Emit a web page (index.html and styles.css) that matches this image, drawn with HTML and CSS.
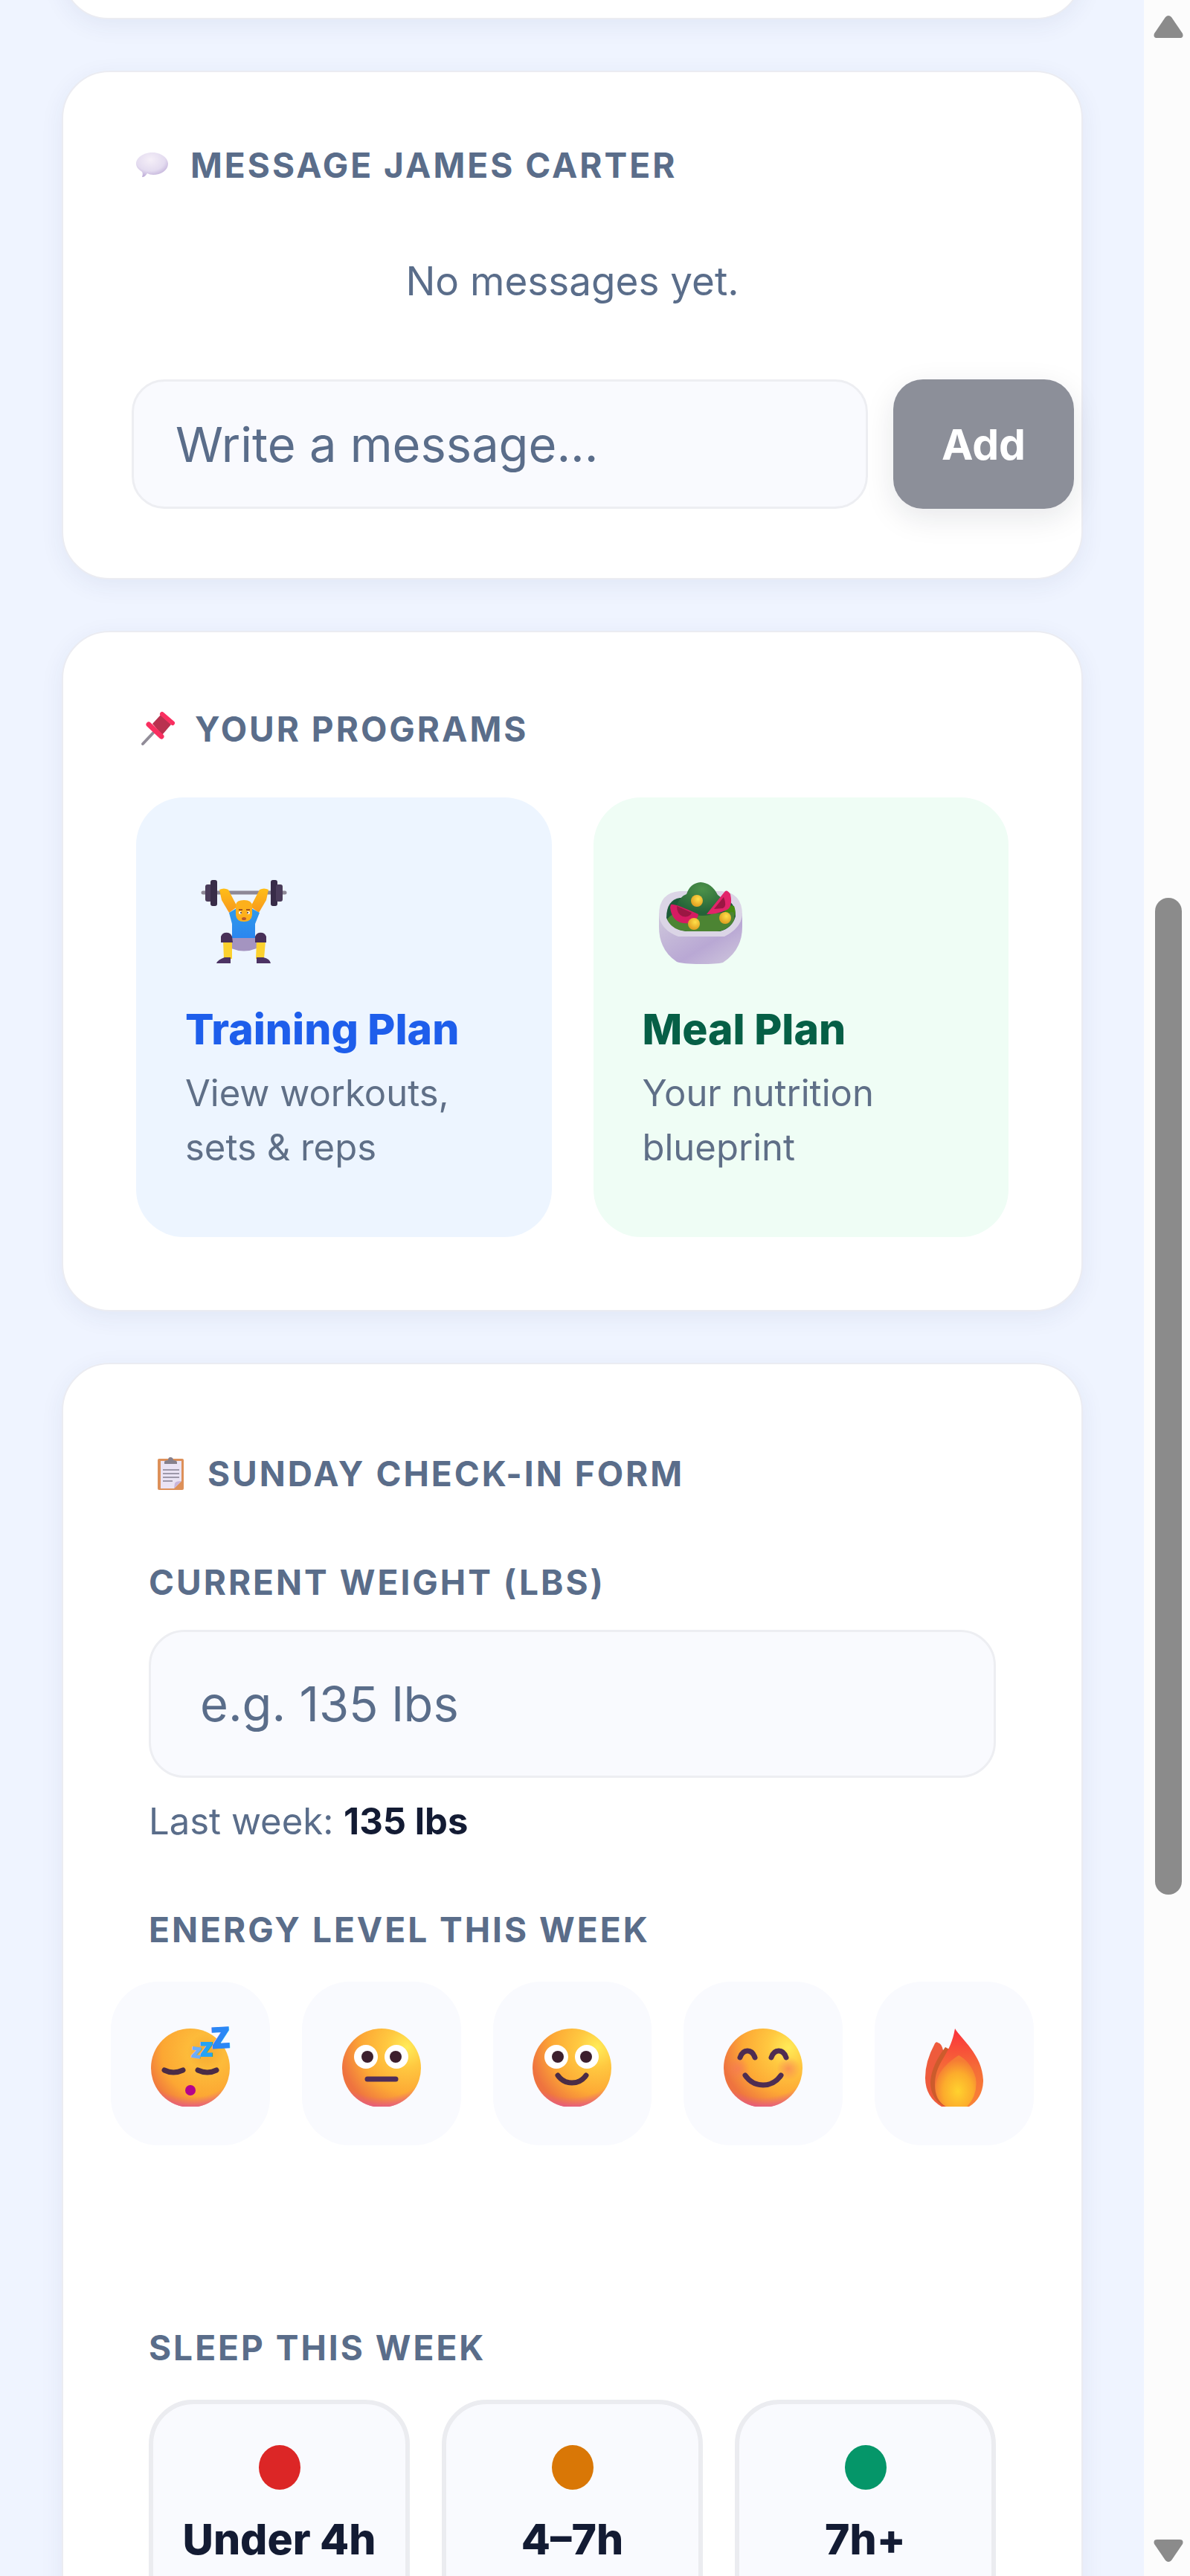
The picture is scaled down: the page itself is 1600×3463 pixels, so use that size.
FILE: index.html
```html
<!DOCTYPE html>
<html lang="en">
<head>
  <meta charset="UTF-8" />
  <meta name="viewport" content="width=device-width, initial-scale=1.0" />
  <title>Client Check-In</title>
  <link rel="stylesheet" href="styles.css">
</head>
<body>
  <!-- shared gradients for the emoji -->
  <svg class="defs" aria-hidden="true">
    <defs>
      <radialGradient id="face" cx="0.82" cy="0.24" r="0.85">
        <stop offset="0" stop-color="#ffec58" />
        <stop offset="0.3" stop-color="#ffc840" />
        <stop offset="0.68" stop-color="#fda935" />
        <stop offset="1" stop-color="#ee733f" />
      </radialGradient>
      <radialGradient id="sleepface" cx="0.7" cy="0.3" r="0.8">
        <stop offset="0" stop-color="#f3a932" />
        <stop offset="0.3" stop-color="#fdbb3a" />
        <stop offset="0.7" stop-color="#fca733" />
        <stop offset="1" stop-color="#ee733f" />
      </radialGradient>
      <radialGradient id="chin" cx="0.5" cy="0.1" r="0.94">
        <stop offset="0.82" stop-color="#e85b8a" stop-opacity="0" />
        <stop offset="1" stop-color="#e0529a" />
      </radialGradient>
      <radialGradient id="cheek">
        <stop offset="0" stop-color="#f7745c" stop-opacity="0.6" />
        <stop offset="1" stop-color="#f7745c" stop-opacity="0" />
      </radialGradient>
      <clipPath id="faceclip"><rect width="120" height="111" /></clipPath>
    </defs>
  </svg>

  <div class="app">
    <main class="page">
      <section class="card card-prev"></section>

      <section class="card card-message">
        <h2 class="card-title">
          <svg class="title-icon" viewBox="0 0 56 56" aria-hidden="true">
            <defs>
              <radialGradient id="bubble" cx="0.45" cy="0.3" r="0.75">
                <stop offset="0" stop-color="#f5eff8" />
                <stop offset="0.6" stop-color="#e4dcf0" />
                <stop offset="1" stop-color="#b8a5d3" />
              </radialGradient>
            </defs>
            <path d="M28 11C39 11 49 18 49 26C49 35 39 41 29 41C26 41 23 40 21 39C19 42 17 44 14 44C15 41 15 39 14 37C9 34 6 30 6 26C6 18 16 11 28 11Z" fill="url(#bubble)" />
          </svg>
          Message James Carter
        </h2>
        <p class="empty">No messages yet.</p>
        <form class="message-form">
          <input class="field message-input" type="text" placeholder="Write a message..." aria-label="Message" />
          <button class="add-btn" type="button">Add</button>
        </form>
      </section>

      <section class="card card-programs">
        <h2 class="card-title">
          <svg class="title-icon" viewBox="0 0 56 56" aria-hidden="true">
            <path d="M9 48L26 30" stroke="#918c98" stroke-width="4" stroke-linecap="round" />
            <path d="M22 21L33 9L47 22L35 36Z" fill="#b9314f" />
            <path d="M35 8L49 20" stroke="#f92f60" stroke-width="6" stroke-linecap="round" />
            <path d="M17 22L34 38" stroke="#f92f60" stroke-width="7" stroke-linecap="round" />
          </svg>
          Your Programs
        </h2>
        <div class="programs">
          <a class="program program-training" href="#training">
            <svg class="program-icon" viewBox="-2 0 144 144" aria-hidden="true">
              <defs>
                <linearGradient id="shirt" x1="0" y1="0" x2="0" y2="1">
                  <stop offset="0" stop-color="#2f9bea" />
                  <stop offset="1" stop-color="#2b85f0" />
                </linearGradient>
                <linearGradient id="arm" x1="0" y1="0" x2="0" y2="1">
                  <stop offset="0" stop-color="#ffbe17" />
                  <stop offset="1" stop-color="#f7981e" />
                </linearGradient>
              </defs>
              <path d="M22 44H132" stroke="#8d8896" stroke-width="5" stroke-linecap="round" />
              <path d="M44 40Q50 37 56 40L68 63L57 71L47 54Z" fill="url(#arm)" />
              <path d="M110 40Q104 37 98 40L86 63L97 71L107 54Z" fill="url(#arm)" />
              <path d="M57 71L67 65H87L98 71L92 86V107H61V86Z" fill="url(#shirt)" />
              <path d="M60 105H94V119Q77 126 60 119Z" fill="#a494c0" />
              <path d="M49 109H61V133H50Z" fill="#fcd12e" />
              <path d="M94 109H106L104 133H93Z" fill="#fcd12e" />
              <path d="M46 111V103A8 8 0 0 1 61 103L62 111Z" fill="#483058" />
              <path d="M92 111V103A8 8 0 0 1 107 103V111Z" fill="#483058" />
              <path d="M51 131H59V139H40Q42 134 51 131Z" fill="#4c3364" />
              <path d="M94 131H103Q112 133 113 139H94Z" fill="#4c3364" />
              <path d="M66 66V60Q67 54 77 54Q88 54 88 62V74Q87 83 77 83Q67 83 66 74Z" fill="#fdb01c" />
              <path d="M70 67H75M80 67H85" stroke="#a7571b" stroke-width="2" />
              <circle cx="72" cy="71" r="2" fill="#fff" /><circle cx="83" cy="71" r="2" fill="#fff" />
              <circle cx="73" cy="71" r="1" fill="#402a32" /><circle cx="82" cy="71" r="1" fill="#402a32" />
              <ellipse cx="77" cy="79" rx="3" ry="2" fill="#b8582c" />
              <rect x="25" y="33" width="9" height="23" rx="3" fill="#4a3c5a" />
              <rect x="32" y="27" width="9" height="35" rx="3" fill="#382c48" />
              <rect x="113" y="27" width="9" height="35" rx="3" fill="#382c48" />
              <rect x="120" y="33" width="9" height="23" rx="3" fill="#4a3c5a" />
            </svg>
            <span class="program-name">Training Plan</span>
            <span class="program-text">View workouts, sets &amp; reps</span>
          </a>
          <a class="program program-meal" href="#meal">
            <svg class="program-icon" viewBox="-2 0 144 144" aria-hidden="true">
              <defs>
                <linearGradient id="bowl" x1="0" y1="0" x2="1" y2="1">
                  <stop offset="0" stop-color="#cfc8dc" />
                  <stop offset="0.6" stop-color="#b9a8d4" />
                  <stop offset="1" stop-color="#d0c8dd" />
                </linearGradient>
                <radialGradient id="leaf" cx="0.55" cy="0.2" r="0.7">
                  <stop offset="0" stop-color="#4c9249" />
                  <stop offset="1" stop-color="#256338" />
                </radialGradient>
                <radialGradient id="corn" cx="0.6" cy="0.35" r="0.6">
                  <stop offset="0" stop-color="#ffe04a" />
                  <stop offset="1" stop-color="#e3a323" />
                </radialGradient>
              </defs>
              <path d="M20 72H132V90Q132 121 106 138Q98 140 76 140Q52 140 44 137Q20 121 20 90Z" fill="url(#bowl)" />
              <path d="M48 42H104Q132 44 132 74Q130 92 108 103H46Q22 94 20 74Q20 44 48 42Z" fill="#dbd5e6" />
              <path d="M48 51H106Q123 56 123 76Q118 92 102 96H56Q36 92 30 78Q30 54 48 51Z" fill="#1c5a38" />
              <path d="M100 58L121 62Q126 76 116 80Z" fill="#438a13" />
              <path d="M31 80Q38 69 56 72L82 73L120 70Q124 79 118 86Q108 96 98 96H58Q38 95 31 80Z" fill="#4c8433" />
              <path d="M44 61Q48 49 57 46Q62 31 76 30Q91 31 99 47Q107 52 106 61Q96 76 76 75Q60 74 44 61Z" fill="url(#leaf)" />
              <path d="M36 60Q40 58 73 73Q72 82 62 85Q38 88 35 64Z" fill="#d51b62" />
              <path d="M44 62L64 71Q61 78 52 76Q44 73 44 62Z" fill="#9b1743" />
              <path d="M109 42Q112 40 116 46Q120 65 109 68Q99 73 84 73Z" fill="#e2246a" />
              <path d="M107 50Q112 62 106 65L94 66Z" fill="#9b1743" />
              <circle cx="71" cy="55" r="8" fill="url(#corn)" />
              <circle cx="67" cy="86" r="8" fill="url(#corn)" />
              <circle cx="109" cy="78" r="8" fill="url(#corn)" />
            </svg>
            <span class="program-name">Meal Plan</span>
            <span class="program-text">Your nutrition blueprint</span>
          </a>
        </div>
      </section>

      <section class="card card-checkin">
        <h2 class="card-title">
          <svg class="title-icon" viewBox="0 0 56 56" aria-hidden="true">
            <rect x="12" y="8" width="35" height="42" rx="2" fill="#dd9059" />
            <path d="M16 11H44V38L34 48H16Z" fill="#eae3f4" />
            <path d="M44 38L34 48L35 41Q36 38 44 38Z" fill="#c9b5dc" />
            <path d="M19 23H41M19 28H41M19 33H41M19 38H32" stroke="#9e98aa" stroke-width="2" />
            <path d="M21 15V12Q22 10 26 10Q26 6 29 6Q33 6 33 10Q38 10 38 13V15Z" fill="#86808c" />
          </svg>
          Sunday Check-In Form
        </h2>
        <form class="checkin-form">
          <label class="label" for="weight">Current Weight (lbs)</label>
          <input class="field weight-input" id="weight" type="text" placeholder="e.g. 135 lbs" />
          <p class="hint">Last week: <strong>135 lbs</strong></p>

          <h3 class="label">Energy Level This Week</h3>
          <div class="energy">
            <button class="energy-btn" type="button" aria-label="Exhausted">
              <svg viewBox="0 0 120 120" aria-hidden="true">
                <g clip-path="url(#faceclip)">
                  <circle cx="60" cy="59" r="53" fill="url(#sleepface)" />
                  <circle cx="60" cy="59" r="53" fill="url(#chin)" />
                </g>
                <path d="M25 62Q37 68 50 62M70 62Q83 68 95 62" fill="none" stroke="#4b2c46" stroke-width="7" stroke-linecap="round" />
                <circle cx="60" cy="89" r="7" fill="#b5028c" />
                <g class="zzz">
                  <text x="62" y="45" font-size="18" fill="#6faef8" stroke="#6faef8" transform="rotate(8 68 38)">Z</text>
                  <text x="73" y="43" font-size="25" fill="#24a3f5" stroke="#24a3f5">Z</text>
                  <text x="88" y="32" font-size="37" fill="#2b87f5" stroke="#2b87f5" transform="rotate(-3 99 18)">Z</text>
                </g>
              </svg>
            </button>
            <button class="energy-btn" type="button" aria-label="Low">
              <svg viewBox="0 0 120 120" aria-hidden="true">
                <g clip-path="url(#faceclip)">
                  <circle cx="60" cy="59" r="53" fill="url(#face)" />
                  <circle cx="60" cy="59" r="53" fill="url(#chin)" />
                </g>
                <circle cx="39" cy="44" r="16" fill="#fff" /><circle cx="80" cy="44" r="16" fill="#fff" />
                <circle cx="41" cy="44" r="8" fill="#3c1f2d" /><circle cx="79" cy="44" r="8" fill="#3c1f2d" />
                <path d="M41 74H79" stroke="#4e2d59" stroke-width="7" stroke-linecap="round" />
              </svg>
            </button>
            <button class="energy-btn" type="button" aria-label="Okay">
              <svg viewBox="0 0 120 120" aria-hidden="true">
                <g clip-path="url(#faceclip)">
                  <circle cx="60" cy="59" r="53" fill="url(#face)" />
                  <circle cx="60" cy="59" r="53" fill="url(#chin)" />
                </g>
                <circle cx="39" cy="44" r="16" fill="#fff" /><circle cx="80" cy="44" r="16" fill="#fff" />
                <circle cx="41" cy="44" r="8" fill="#3c1f2d" /><circle cx="79" cy="44" r="8" fill="#3c1f2d" />
                <path d="M41 69Q48 79 60 79Q72 79 79 69" fill="none" stroke="#4b2c46" stroke-width="7" stroke-linecap="round" />
              </svg>
            </button>
            <button class="energy-btn" type="button" aria-label="Good">
              <svg viewBox="0 0 120 120" aria-hidden="true">
                <g clip-path="url(#faceclip)">
                  <circle cx="60" cy="59" r="53" fill="url(#face)" />
                  <circle cx="60" cy="59" r="53" fill="url(#chin)" />
                </g>
                <circle cx="26" cy="60" r="16" fill="url(#cheek)" /><circle cx="94" cy="60" r="16" fill="url(#cheek)" />
                <path d="M29 45Q32 36 39 36Q46 36 49 45M71 45Q74 36 81 36Q88 36 91 45" fill="none" stroke="#4e2d52" stroke-width="7" stroke-linecap="round" />
                <path d="M36 69Q45 82 60 82Q75 82 84 69" fill="none" stroke="#4e2d52" stroke-width="7" stroke-linecap="round" />
              </svg>
            </button>
            <button class="energy-btn" type="button" aria-label="On fire">
              <svg viewBox="0 0 120 120" aria-hidden="true">
                <defs>
                  <linearGradient id="flame" x1="0" y1="0" x2="0" y2="1">
                    <stop offset="0" stop-color="#fb313c" />
                    <stop offset="0.5" stop-color="#f56b37" />
                    <stop offset="1" stop-color="#f98437" />
                  </linearGradient>
                  <radialGradient id="core" cx="0.55" cy="0.7" r="0.6">
                    <stop offset="0" stop-color="#ffd22e" />
                    <stop offset="0.6" stop-color="#fcac2c" />
                    <stop offset="1" stop-color="#f57c34" />
                  </radialGradient>
                </defs>
                <g clip-path="url(#faceclip)">
                  <path d="M38 25Q43 26 45 35L64 60V111H43Q21 98 21 72Q21 50 34 26Q36 23 38 25Z" fill="#ee5b3c" />
                  <path d="M48 31Q28 58 28 80Q29 101 46 110H64V40Z" fill="#cc5b2c" />
                  <path d="M61 6C69 20 99 42 99 77Q98 100 80 111H50C32 104 31 78 38 60C44 44 56 35 61 6Z" fill="url(#flame)" />
                  <path d="M66 42C47 54 35 68 35 87Q36 103 49 111H77Q92 96 89 73Q83 51 66 42Z" fill="url(#core)" />
                </g>
              </svg>
            </button>
          </div>

          <h3 class="label">Sleep This Week</h3>
          <div class="sleep">
            <button class="sleep-btn sleep-low" type="button"><span class="dot"></span>Under 4h</button>
            <button class="sleep-btn sleep-mid" type="button"><span class="dot"></span>4–7h</button>
            <button class="sleep-btn sleep-high" type="button"><span class="dot"></span>7h+</button>
          </div>
        </form>
      </section>
    </main>

    <div class="scrollbar" aria-hidden="true">
      <svg class="arrow" viewBox="0 0 42 32">
        <path d="M17 3Q21 -1 25 3L40 25Q42 31 36 31H6Q0 31 2 25Z" />
      </svg>
      <div class="track"><div class="thumb"></div></div>
      <svg class="arrow" viewBox="0 0 42 32">
        <path d="M17 29Q21 33 25 29L40 7Q42 1 36 1H6Q0 1 2 7Z" />
      </svg>
    </div>
  </div>
</body>
</html>
```

FILE: styles.css
```css
* {
  box-sizing: border-box;
}
body {
  margin: 0;
  font-family: Inter, sans-serif;
  background: #eff4ff;
  color: #5a6d8a;
}
h2, h3, p {
  margin: 0;
}
button, input {
  font-family: inherit;
}
.defs {
  display: block;
  width: 0;
  height: 0;
}
.app {
  display: flex;
  height: 100vh;
  overflow: hidden;
}
.page {
  flex: 1;
  min-width: 0;
  padding: 0 82px 0 83px;
}

/* cards */
.card {
  background: #fff;
  border: 2px solid #ebecf2;
  border-radius: 64px;
  box-shadow: 0 8px 32px rgba(40, 60, 110, 0.07);
  margin-bottom: 69px;
}
.card-prev {
  height: 126px;
  margin-top: -100px;
}
.card-message {
  padding: 97px 92px 93px;
}
.card-programs {
  padding: 102px 98px 98px;
}
.card-checkin {
  padding: 119px 115px;
}
.card-title, .label {
  display: block;
  font-size: 46px;
  font-weight: 700;
  line-height: 56px;
  letter-spacing: 3px;
  text-transform: uppercase;
}
.card-title {
  display: flex;
  align-items: center;
  gap: 23px;
}
.title-icon {
  width: 56px;
  height: 56px;
  fill: none;
}

/* inputs */
.field {
  min-width: 0;
  background: #f9fafe;
  border: 3px solid #edeef2;
  border-radius: 44px;
  padding: 0 56px;
  font-size: 65px;
  color: #131b33;
}
.field::placeholder {
  color: #5a6d8a;
  opacity: 1;
}

/* messages */
.empty {
  margin: 88px 0 92px;
  font-size: 53px;
  line-height: 80px;
  text-align: center;
}
.message-form {
  display: flex;
  gap: 34px;
  margin-right: -82px;
}
.message-input {
  flex: 1;
  height: 174px;
}
.add-btn {
  width: 243px;
  border: none;
  border-radius: 40px;
  background: #8c8f99;
  box-shadow: 0 12px 40px rgba(20, 25, 50, 0.1);
  color: #fff;
  font-size: 57px;
  font-weight: 700;
}

/* programs */
.programs {
  display: grid;
  grid-template-columns: 1fr 1fr;
  gap: 56px;
  margin-top: 64px;
}
.program {
  display: flex;
  flex-direction: column;
  padding: 84px 66px;
  border-radius: 64px;
  text-decoration: none;
}
.program-training {
  background: #edf5ff;
}
.program-meal {
  background: #effdf5;
}
.program-icon {
  width: 144px;
  height: 144px;
}
.program-name {
  margin: 50px 0 15px;
  font-size: 57px;
  font-weight: 800;
  line-height: 68px;
}
.program-training .program-name {
  color: #1e5eeb;
}
.program-meal .program-name {
  color: #065f46;
}
.program-text {
  font-size: 49px;
  line-height: 73px;
  color: #5f6f87;
}

/* check-in */
.checkin-form {
  margin-top: 90px;
}
.weight-input {
  width: 100%;
  height: 199px;
  margin-top: 36px;
  padding: 0 66px;
  border-radius: 48px;
}
.hint {
  margin: 23px 0 81px;
  font-size: 49px;
  line-height: 72px;
}
.hint strong {
  color: #131b33;
  font-weight: 700;
}
.energy {
  display: grid;
  grid-template-columns: repeat(5, 1fr);
  gap: 43px;
  margin: 42px -51px 244px;
}
.energy-btn {
  display: flex;
  align-items: center;
  justify-content: center;
  height: 220px;
  padding: 14px 0 0;
  border: none;
  border-radius: 64px;
  background: #f9fafe;
}
.energy-btn svg {
  width: 120px;
  height: 120px;
  overflow: visible;
}
.zzz {
  font-weight: 800;
  stroke-width: 2px;
}
.sleep {
  display: grid;
  grid-template-columns: repeat(3, 1fr);
  gap: 43px;
  margin-top: 42px;
}
.sleep-btn {
  display: flex;
  flex-direction: column;
  align-items: center;
  gap: 33px;
  height: 360px;
  padding: 55px 0;
  border: 6px solid #ebecf0;
  border-radius: 60px;
  background: #f9fafe;
  color: #131b33;
  font-size: 57px;
  font-weight: 800;
  line-height: 68px;
}
.dot {
  width: 56px;
  height: 60px;
  border-radius: 50%;
}
.sleep-low .dot {
  background: #dc2626;
}
.sleep-mid .dot {
  background: #d97706;
}
.sleep-high .dot {
  background: #059669;
}

/* scrollbar */
.scrollbar {
  display: flex;
  flex-direction: column;
  align-items: center;
  gap: 20px;
  width: 62px;
  padding: 20px 0 18px 4px;
  background: #fcfcfc;
}
.arrow {
  width: 42px;
  height: 32px;
  fill: #8b8b8b;
}
.track {
  flex: 1;
  display: flex;
  flex-direction: column;
}
.track::before {
  content: "";
  flex: 55;
}
.track::after {
  content: "";
  flex: 41;
}
.thumb {
  flex: 65;
  width: 36px;
  border-radius: 18px;
  background: #8b8b8b;
}
```
